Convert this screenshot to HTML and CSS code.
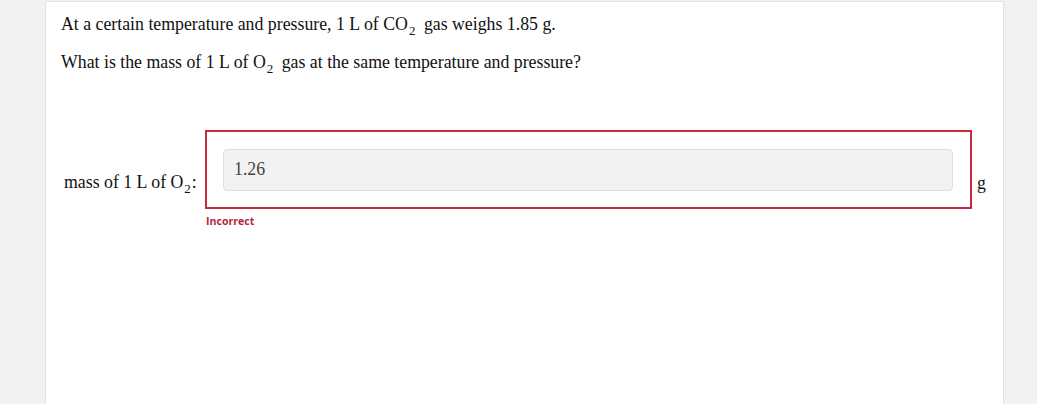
FILE: index.html
```html
<!DOCTYPE html>
<html>
<head>
<meta charset="utf-8">
<link rel="stylesheet" href="styles.css">
</head>
<body>
<div class="card">
  <p class="q q1">At a certain temperature and pressure, 1 L of CO<sub>2</sub> gas weighs 1.85 g.</p>
  <p class="q q2">What is the mass of 1 L of O<sub>2</sub> gas at the same temperature and pressure?</p>
  <div class="answer">
    <div class="label">mass of 1 L of O<sub>2</sub>:</div>
    <div class="field">
      <div class="box">
        <div class="input">1.26</div>
      </div>
      <div class="feedback">Incorrect</div>
    </div>
    <div class="unit">g</div>
  </div>
</div>
</body>
</html>
```
FILE: styles.css
```css
html, body {
  margin: 0;
  padding: 0;
  background: #f2f2f2;
  height: 100%;
}
body {
  font-family: "Liberation Serif", "Times New Roman", serif;
  color: #111;
  padding-top: 1px;
  overflow: hidden;
}
.card {
  margin-left: 45px;
  width: 959px;
  min-height: 420px;
  background: #fff;
  border: 1px solid #e2e2e2;
  border-bottom: none;
  padding: 11px 0 0 15px;
  box-sizing: border-box;
}
.q {
  margin: 0;
  font-size: 17.8px;
  line-height: 22px;
}
.q2 {
  margin-top: 16px;
}
sub {
  font-size: 13px;
  vertical-align: -5px;
  line-height: 0;
  margin-left: 1px;
  margin-right: 4px;
}
.answer {
  display: flex;
  align-items: flex-start;
  margin-top: 57px;
  margin-left: 3px;
}
.label {
  font-size: 17.8px;
  line-height: 22px;
  width: 141px;
  margin-top: 41px;
}
.label sub {
  margin-right: 1px;
}
.field {
  display: flex;
  flex-direction: column;
}
.box {
  width: 767px;
  height: 79px;
  border: 2px solid #c62a3f;
  box-sizing: border-box;
  padding: 17px 17px 0 16px;
}
.input {
  height: 42px;
  box-sizing: border-box;
  background: #f2f2f2;
  border: 1px solid #dedede;
  border-radius: 4px;
  padding: 9px 10px;
  font-size: 17.8px;
  line-height: 20px;
  color: #444;
}
.feedback {
  font-family: "Open Sans", "Noto Sans", sans-serif;
  font-weight: 700;
  font-size: 10.6px;
  line-height: 14px;
  color: #b5283c;
  margin-top: 5px;
  margin-left: 1px;
}
.unit {
  font-size: 17.8px;
  line-height: 22px;
  margin-top: 42px;
  margin-left: 5px;
}
```
